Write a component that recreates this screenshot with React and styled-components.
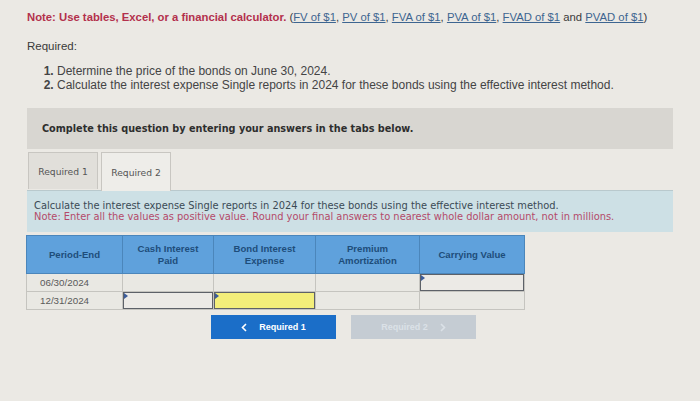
import React from "react";
import styled, { createGlobalStyle } from "styled-components";

const GlobalStyle = createGlobalStyle`
  html, body {
    margin: 0;
    padding: 0;
    background: #ebe9e4;
  }
  body {
    width: 700px;
    height: 401px;
    overflow: hidden;
    font-family: "Liberation Sans", Arial, sans-serif;
  }
`;

const Page = styled.div`
  padding: 10px 27px 0 27px;
  color: #3a3a3a;
`;

const NoteLine = styled.p`
  margin: 0;
  font-size: 11.3px;
  line-height: 14px;
  white-space: nowrap;
`;

const RedNote = styled.span`
  color: #b3304c;
  font-weight: bold;
`;

const Ref = styled.a`
  color: #3d6590;
  text-decoration: underline;
`;

const Heading = styled.p`
  margin: 15px 0 0 0;
  font-size: 11.5px;
  line-height: 14px;
  color: #3a3a3a;
`;

const List = styled.ol`
  margin: 11px 0 0 0;
  padding-left: 30px;
  font-size: 12px;
  line-height: 14px;
  color: #444;
  white-space: nowrap;

  li::marker {
    font-weight: bold;
  }
`;

const Instruction = styled.div`
  margin-top: 16px;
  background: #d8d6d1;
  height: 41px;
  display: flex;
  align-items: center;
  padding-left: 15px;
  font-family: "DejaVu Sans", Verdana, sans-serif;
  font-size: 9.7px;
  font-weight: bold;
  color: #2e2e2e;
`;

const Tabs = styled.div`
  display: flex;
  gap: 3px;
  margin-top: 3px;
  padding-left: 1px;
`;

const Tab = styled.div`
  width: 70px;
  height: ${(p) => (p.$active ? "39px" : "37px")};
  margin-bottom: ${(p) => (p.$active ? "-1px" : "0")};
  box-sizing: border-box;
  display: flex;
  align-items: center;
  justify-content: center;
  border: 1px solid #c8c6c1;
  border-bottom: none;
  background: ${(p) => (p.$active ? "#eeede9" : "#e1dfda")};
  font-family: "DejaVu Sans", Verdana, sans-serif;
  font-size: 9.2px;
  color: #555;
  position: relative;
  z-index: 1;
`;

const TabBody = styled.div`
  background: #cde0e5;
  border-top: 1px solid #b9c9cd;
  height: 42px;
  padding: 9px 7px 0 7px;
  box-sizing: border-box;
  font-family: "DejaVu Sans", Verdana, sans-serif;
  font-size: 9.9px;
  line-height: 11px;
  color: #3b4a55;
  white-space: nowrap;
`;

const PinkNote = styled.div`
  color: #b44a6a;
`;

const Table = styled.table`
  margin-top: 3px;
  margin-left: -1px;
  border-collapse: collapse;
  font-family: "Liberation Sans", Arial, sans-serif;
`;

const HeadCell = styled.th`
  width: ${(p) => p.$w}px;
  height: 37px;
  padding: 0;
  background: #5fa1dc;
  border: 1px solid #4b86bb;
  color: #1e4d7a;
  font-size: 9.6px;
  font-weight: bold;
  line-height: 12px;
  text-align: center;
`;

const Cell = styled.td`
  height: 17px;
  padding: 0;
  border: 1px solid #c5c4bf;
  background: #e9e8e3;
  font-size: 9.8px;
  color: #5a5a5a;
  position: relative;
`;

const DateCell = styled(Cell)`
  padding-left: 13px;
`;

const Field = styled.div`
  position: absolute;
  inset: 0;
  border: 1px solid #5d6168;
  background: ${(p) => (p.$yellow ? "#f3ee7a" : "#eceae6")};

  &::before {
    content: "";
    position: absolute;
    left: 0;
    top: 0;
    border-style: solid;
    border-width: 3px 0 3px 4px;
    border-color: transparent transparent transparent #3b5c9a;
  }
`;

const Nav = styled.div`
  display: flex;
  gap: 15px;
  margin-top: 5px;
  padding-left: 184px;
`;

const NavButton = styled.div`
  width: 125px;
  height: 24px;
  display: flex;
  align-items: center;
  justify-content: center;
  gap: 12px;
  background: ${(p) => (p.$disabled ? "#c5ccd3" : "#1b6ec8")};
  color: ${(p) => (p.$disabled ? "#dbe1e7" : "#ffffff")};
  font-size: 9px;
  font-weight: bold;
`;

const Chevron = ({ dir }) => (
  <svg width="6" height="9" viewBox="0 0 6 9">
    <path
      d={dir === "left" ? "M5 1 L1.5 4.5 L5 8" : "M1 1 L4.5 4.5 L1 8"}
      fill="none"
      stroke="currentColor"
      strokeWidth="1.6"
    />
  </svg>
);

const cols = [
  { w: 95, label: ["Period-End"] },
  { w: 90, label: ["Cash Interest", "Paid"] },
  { w: 101, label: ["Bond Interest", "Expense"] },
  { w: 103, label: ["Premium", "Amortization"] },
  { w: 104, label: ["Carrying Value"] },
];

export default function App() {
  return (
    <>
      <GlobalStyle />
      <Page>
        <NoteLine>
          <RedNote>Note: Use tables, Excel, or a financial calculator.</RedNote>{" "}
          (<Ref>FV of $1</Ref>, <Ref>PV of $1</Ref>, <Ref>FVA of $1</Ref>,{" "}
          <Ref>PVA of $1</Ref>, <Ref>FVAD of $1</Ref> and <Ref>PVAD of $1</Ref>)
        </NoteLine>
        <Heading>Required:</Heading>
        <List>
          <li>Determine the price of the bonds on June 30, 2024.</li>
          <li>
            Calculate the interest expense Single reports in 2024 for these bonds
            using the effective interest method.
          </li>
        </List>

        <Instruction>Complete this question by entering your answers in the tabs below.</Instruction>

        <Tabs>
          <Tab>Required 1</Tab>
          <Tab $active>Required 2</Tab>
        </Tabs>
        <TabBody>
          <div>
            Calculate the interest expense Single reports in 2024 for these bonds using the
            effective interest method.
          </div>
          <PinkNote>
            Note: Enter all the values as positive value. Round your final answers to nearest
            whole dollar amount, not in millions.
          </PinkNote>
        </TabBody>

        <Table>
          <thead>
            <tr>
              {cols.map((c) => (
                <HeadCell key={c.label[0]} $w={c.w}>
                  {c.label.map((l) => (
                    <div key={l}>{l}</div>
                  ))}
                </HeadCell>
              ))}
            </tr>
          </thead>
          <tbody>
            <tr>
              <DateCell>06/30/2024</DateCell>
              <Cell />
              <Cell />
              <Cell />
              <Cell>
                <Field />
              </Cell>
            </tr>
            <tr>
              <DateCell>12/31/2024</DateCell>
              <Cell>
                <Field />
              </Cell>
              <Cell>
                <Field $yellow />
              </Cell>
              <Cell />
              <Cell />
            </tr>
          </tbody>
        </Table>

        <Nav>
          <NavButton>
            <Chevron dir="left" />
            <span>Required 1</span>
          </NavButton>
          <NavButton $disabled>
            <span>Required 2</span>
            <Chevron dir="right" />
          </NavButton>
        </Nav>
      </Page>
    </>
  );
}
